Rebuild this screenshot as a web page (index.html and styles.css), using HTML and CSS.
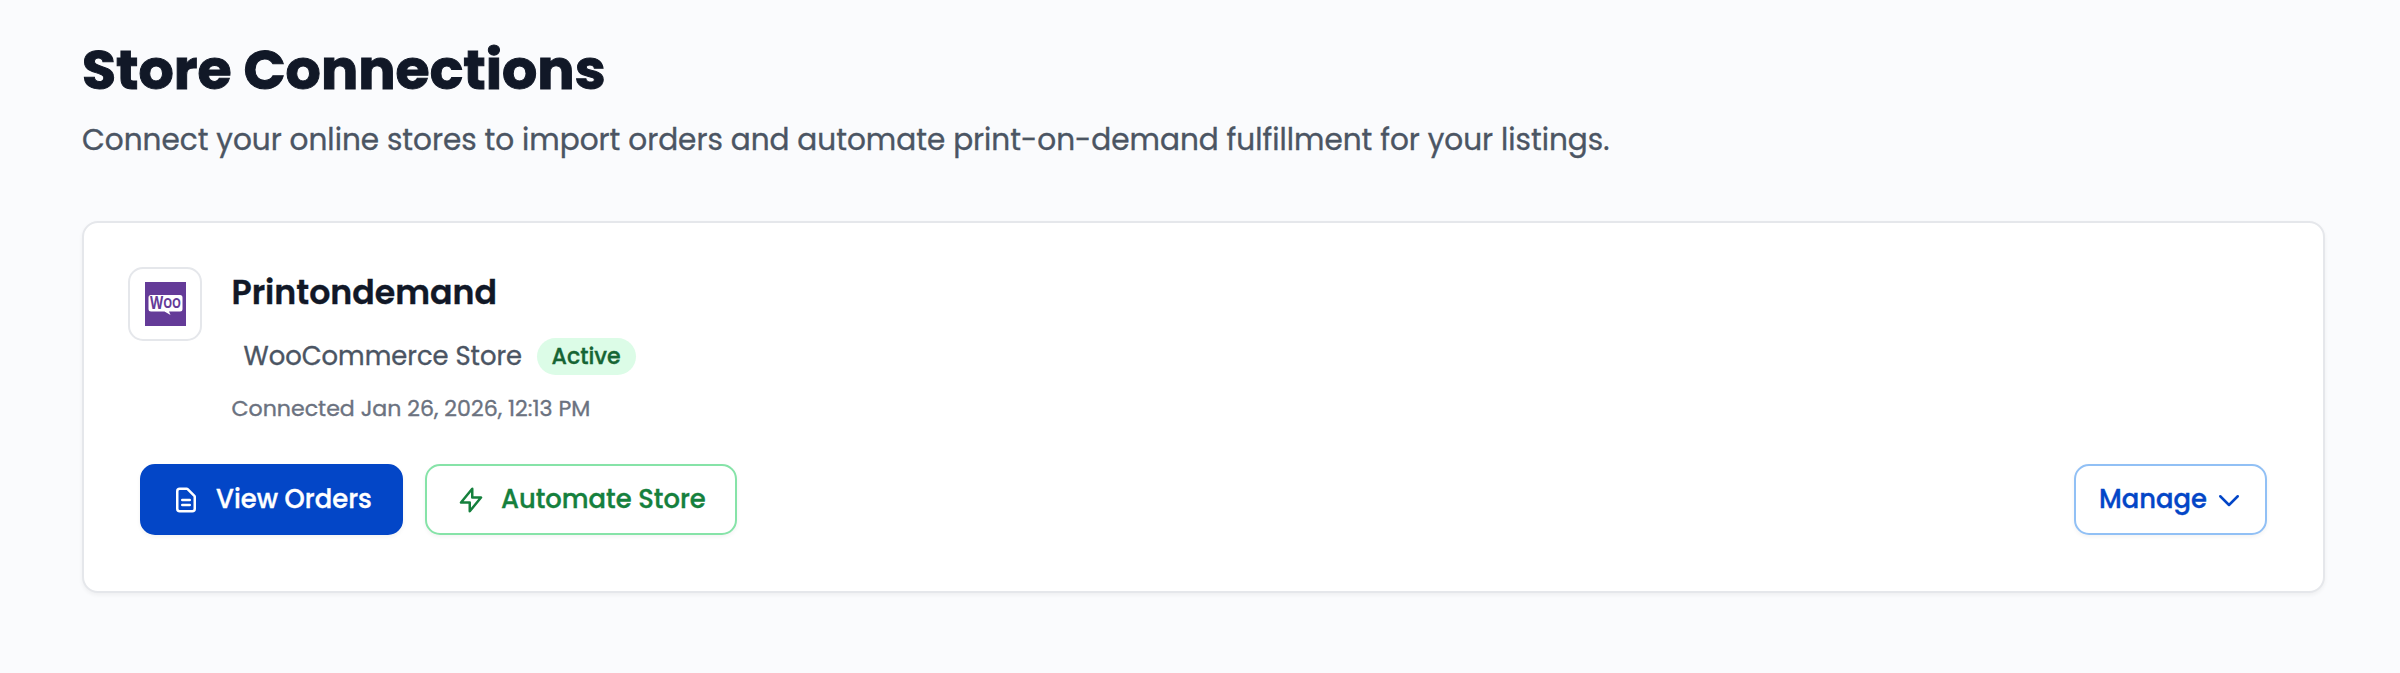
FILE: index.html
```html
<!DOCTYPE html>
<html lang="en">
<head>
    <meta charset="UTF-8" />
    <title>Store Connections</title>
    <link rel="stylesheet" href="styles.css">
</head>
<body>
<h1 class="page-title">Store Connections</h1>
<p class="page-subtitle">Connect your online stores to import orders and automate print-on-demand fulfillment for your listings.</p>

<div class="store-card">
    <div class="store-head">
        <div class="store-logo">
            <svg width="41" height="44" viewBox="0 0 41 44">
                <rect width="41" height="44" fill="#643b98"/>
                <path d="M6 13h29a2.500 2.500 0 0 1 2.500 2.500v11.500a2.500 2.500 0 0 1-2.500 2.500H24l1.500 3.500L19.500 29.500H6A2.500 2.500 0 0 1 3.500 27V15.500A2.500 2.500 0 0 1 6 13z" fill="#fff"/>
                <text class="woo-text" x="5" y="27" textLength="31" lengthAdjust="spacingAndGlyphs">W<tspan class="woo-small" dy="-1">OO</tspan></text>
            </svg>
        </div>
        <div class="store-info">
            <h2 class="store-name">Printondemand</h2>
            <div class="store-meta">
                <span class="store-type">WooCommerce Store</span>
                <span class="badge">Active</span>
            </div>
            <p class="store-date">Connected Jan 26, 2026, 12:13 PM</p>
        </div>
    </div>

    <div class="store-actions">
        <button class="btn btn-primary">
            <svg class="icon" viewBox="0 0 24 24"><path d="M9 12h6m-6 4h6m2 5H7a2 2 0 01-2-2V5a2 2 0 012-2h5.586a1 1 0 01.707.293l5.414 5.414a1 1 0 01.293.707V19a2 2 0 01-2 2z"/></svg>
            View Orders
        </button>
        <button class="btn btn-green">
            <svg class="icon" viewBox="0 0 24 24"><path d="M13 10V3L4 14h7v7l9-11h-7z"/></svg>
            Automate Store
        </button>
        <button class="btn btn-manage">
            Manage
            <svg class="icon" viewBox="0 0 24 24"><path d="M19 9l-7 7-7-7"/></svg>
        </button>
    </div>
</div>
</body>
</html>
```

FILE: styles.css
```css
* {
  box-sizing: border-box;
}
body {
  margin: 0;
  padding: 38px 75px 0 82px;
  min-height: 673px;
  font-family: Poppins, Inter, "Liberation Sans", sans-serif;
  background: #fafbfd;
  color: #111827;
  white-space: nowrap;
  -webkit-text-stroke: 0.35px;
}
h1, h2, p {
  margin: 0;
}
.page-title {
  font-size: 55.4px;
  line-height: 64px;
  font-weight: 700;
  -webkit-text-stroke: 1px;
}
.page-subtitle {
  margin-top: 16px;
  font-size: 29.52px;
  line-height: 44px;
  color: #4b5563;
}
.store-card {
  margin-top: 59px;
  height: 372px;
  padding: 44px 56px 0 44px;
  background: #fff;
  border: 2px solid #e5e7eb;
  border-radius: 16px;
  box-shadow: 0 2px 4px rgba(0,0,0,0.05);
}
.store-head {
  display: flex;
  gap: 29.5px;
}
.store-logo {
  display: flex;
  align-items: center;
  justify-content: center;
  width: 74px;
  height: 74px;
  border: 2px solid #e5e7eb;
  border-radius: 15px;
}
.woo-text {
  font-family: "Open Sans", Inter, sans-serif;
  font-size: 17px;
  font-weight: 700;
  fill: #643b98;
  -webkit-text-stroke: 0;
}
.woo-small {
  font-size: 14px;
}
.store-name {
  margin-top: 4px;
  font-size: 33.2px;
  line-height: 44px;
  font-weight: 600;
}
.store-meta {
  display: flex;
  align-items: center;
  gap: 14.5px;
  height: 38px;
  margin-top: 22px;
  padding-left: 12px;
}
.store-type {
  font-size: 25.8px;
  line-height: 38px;
  color: #4b5563;
}
.badge {
  height: 37px;
  padding: 0 15px;
  border-radius: 19px;
  background: #dcfce7;
  color: #166534;
  font-size: 22.1px;
  line-height: 37px;
  font-weight: 500;
}
.store-date {
  margin-top: 18px;
  font-size: 22.1px;
  line-height: 32px;
  color: #6b7280;
}
.store-actions {
  display: flex;
  gap: 22px;
  margin-top: 39px;
  padding-left: 12px;
}
.btn {
  display: flex;
  align-items: center;
  gap: 15px;
  height: 71px;
  padding: 0 29px;
  border: 2px solid;
  border-radius: 15px;
  background: #fff;
  font: inherit;
  font-size: 25.8px;
  font-weight: 500;
  box-shadow: 0 2px 4px rgba(0,0,0,0.05);
  cursor: pointer;
}
.btn-primary {
  width: 263px;
  background: #0346c7;
  border-color: #0346c7;
  color: #fff;
}
.btn-green {
  width: 312px;
  border-color: #86e3a8;
  color: #15803d;
}
.btn-manage {
  width: 193px;
  margin-left: auto;
  padding: 0 21px 0 23px;
  gap: 7px;
  border-color: #91c0f5;
  color: #0346c7;
}
.icon {
  flex: none;
  width: 30px;
  height: 30px;
  fill: none;
  stroke: currentColor;
  stroke-width: 2;
  stroke-linecap: round;
  stroke-linejoin: round;
}
```
